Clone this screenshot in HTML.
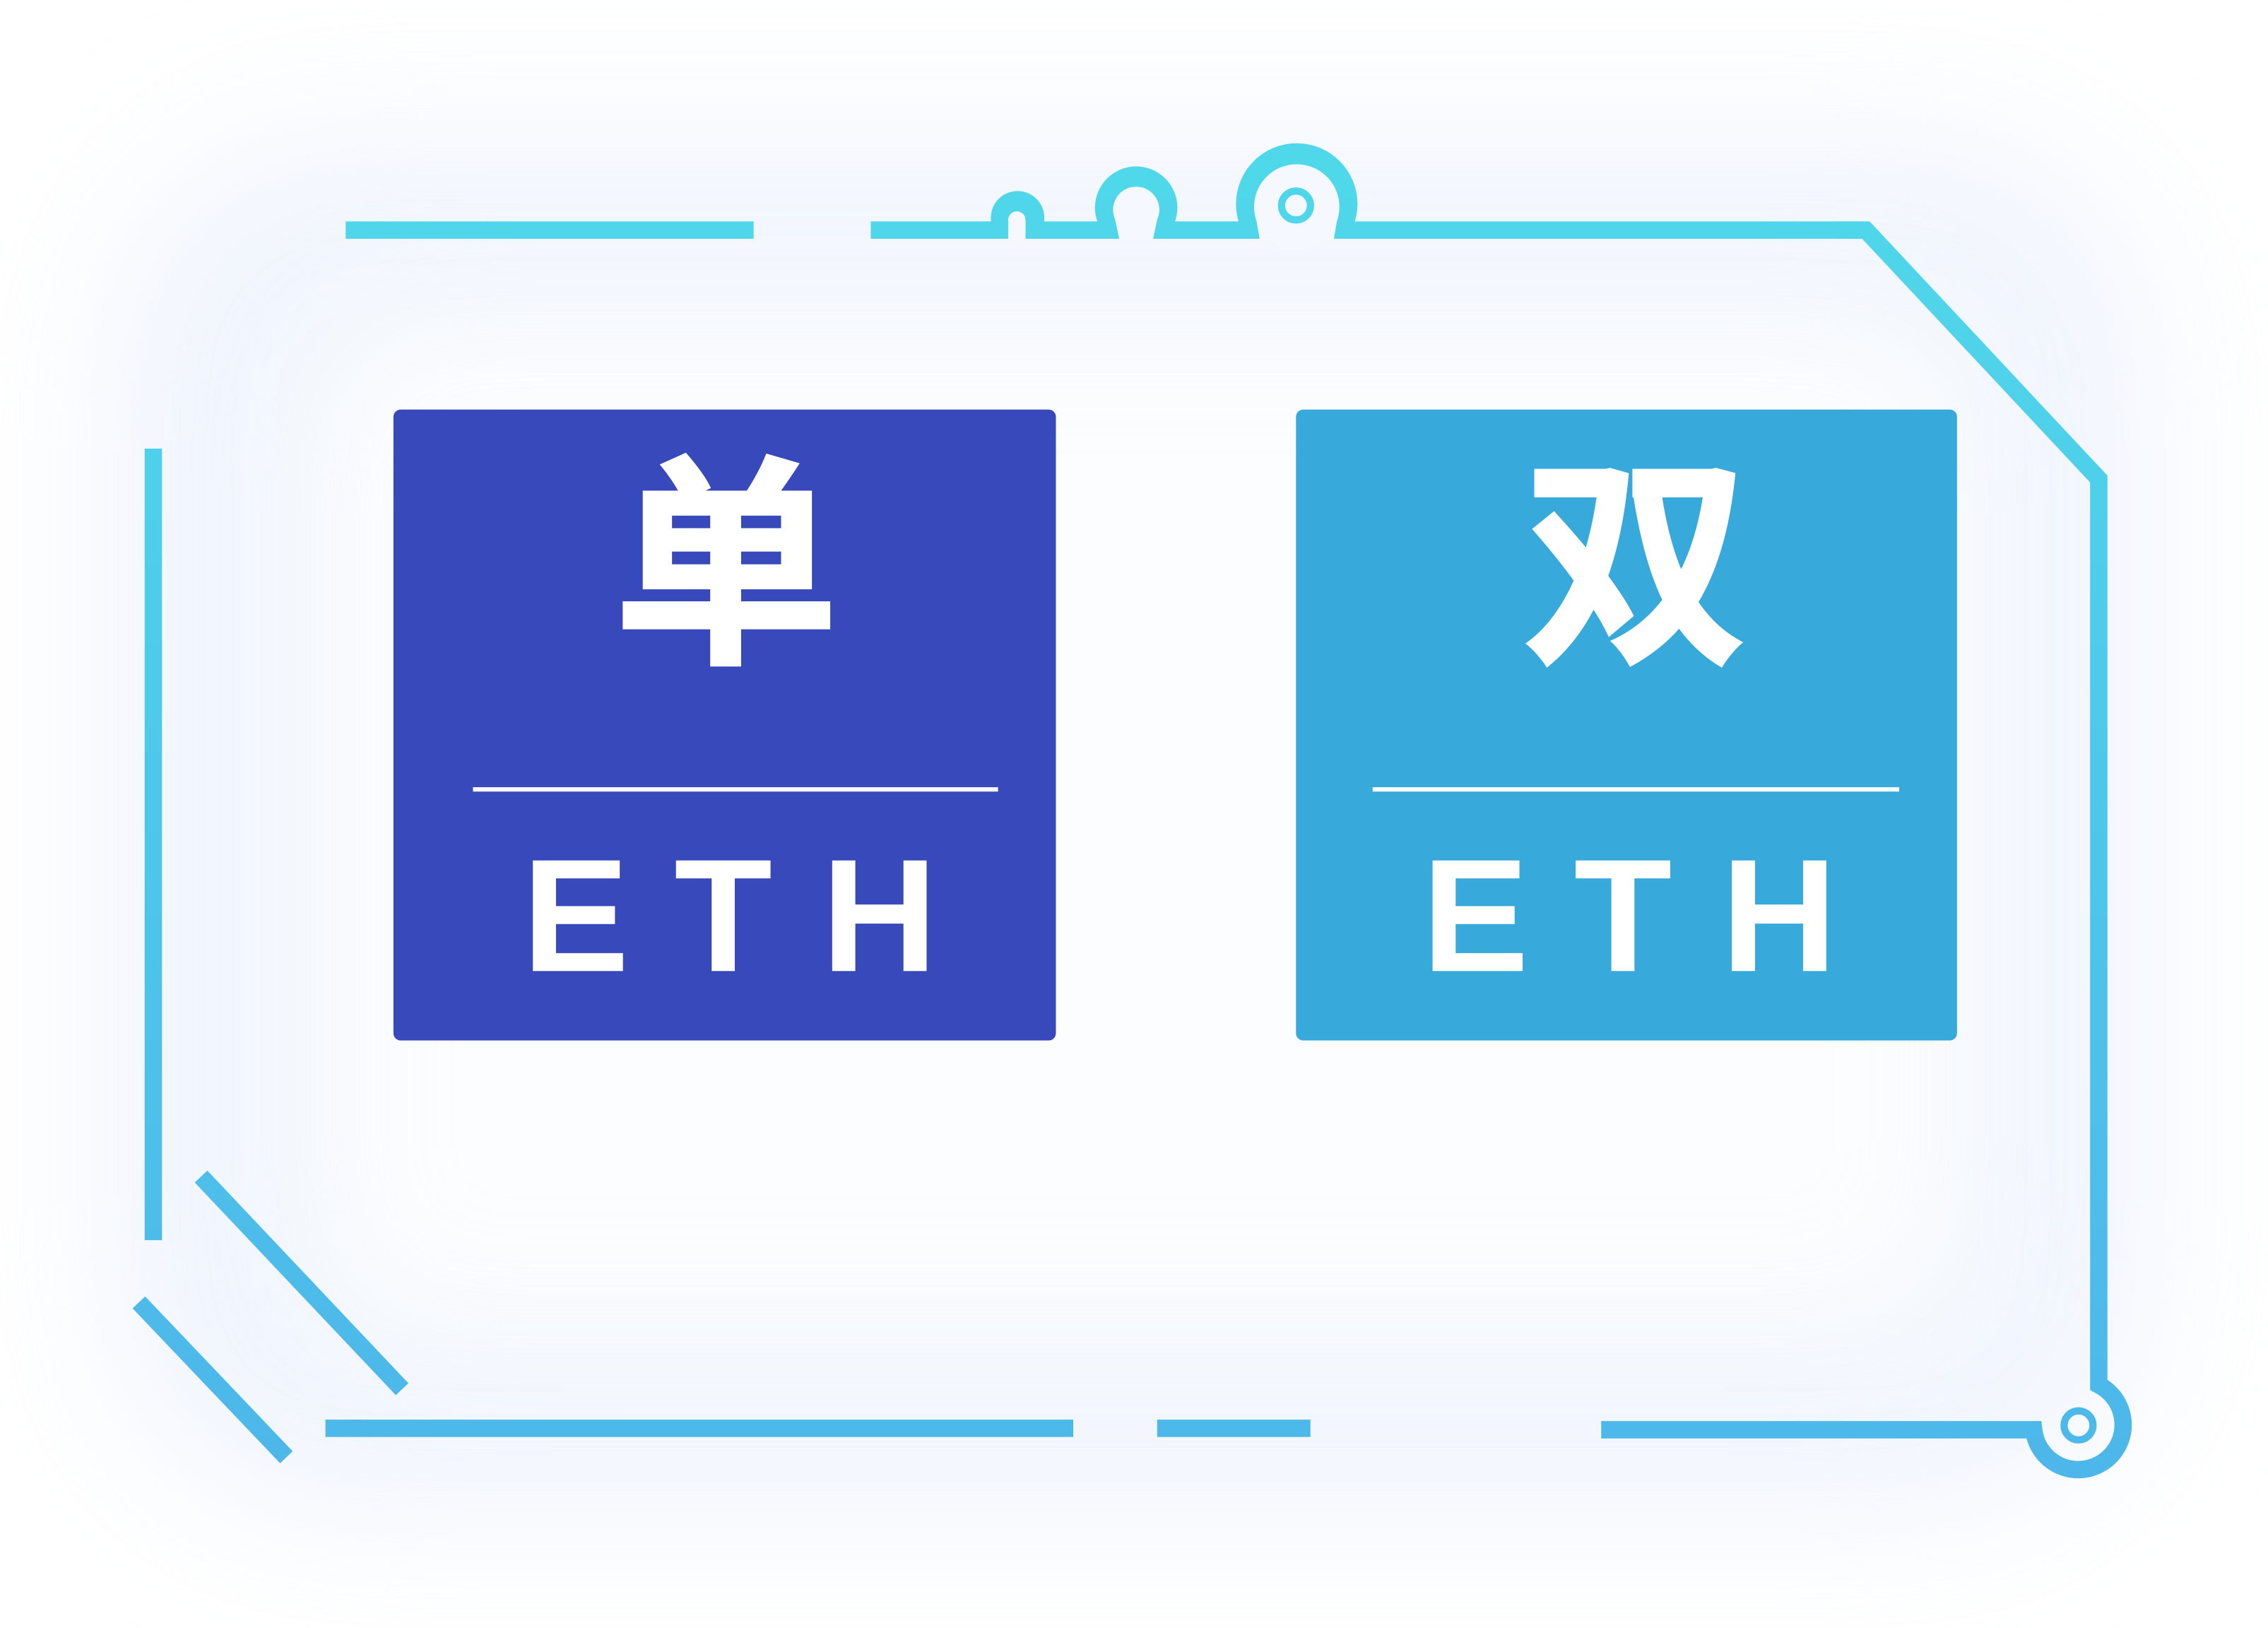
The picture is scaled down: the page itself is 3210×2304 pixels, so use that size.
<!DOCTYPE html>
<html><head><meta charset="utf-8"><style>
html,body{margin:0;padding:0;background:#fff}
svg{display:block}
</style></head><body>
<svg width="3210" height="2304" viewBox="0 0 1568 1125" preserveAspectRatio="none" xmlns="http://www.w3.org/2000/svg">
<defs>
<linearGradient id="g" gradientUnits="userSpaceOnUse" x1="0" y1="100" x2="0" y2="1030">
<stop offset="0" stop-color="#4fd8ea"/><stop offset="1" stop-color="#4db6ea"/>
</linearGradient>
<filter id="b" x="-30%" y="-30%" width="160%" height="160%"><feGaussianBlur stdDeviation="50"/></filter>
<clipPath id="top"><rect x="0" y="0" width="1568" height="158"/></clipPath>
</defs>
<rect width="1568" height="1125" fill="#fff"/>
<rect x="70" y="90" width="1420" height="960" rx="160" fill="#eaf1fc" filter="url(#b)" opacity="0.7"/>
<rect x="220" y="220" width="1140" height="700" rx="60" fill="#fff" filter="url(#b)" opacity="0.8"/>
<g fill="none" stroke="url(#g)" stroke-width="12" stroke-linejoin="miter">
<path d="M1270,159 H1290 L1451,331 V957 A31 31 0 1 1 1406,988 H1107"/>
<path d="M106,310 V857"/>
<path d="M139,813 L278,960"/>
<path d="M96,900 L198,1007"/>
</g>
<g fill="url(#g)">
<rect x="239" y="153" width="282" height="12"/>
<rect x="602" y="153" width="688" height="12"/>
<rect x="225" y="981" width="517" height="12"/>
<rect x="800" y="981" width="106" height="12"/>
<g clip-path="url(#top)">
<circle cx="703.5" cy="150.5" r="18.5"/>
<circle cx="785.5" cy="143.5" r="28.5"/>
<circle cx="896.5" cy="141" r="42"/>
</g>
</g>
<g fill="#f5f8fe">
<circle cx="703" cy="152" r="6"/>
<rect x="697" y="152" width="12" height="14"/>
<circle cx="785.5" cy="145" r="16"/>
<polygon points="769.5,145 801.5,145 797,166 774,166"/>
<circle cx="896.5" cy="143" r="29.5"/>
<polygon points="867,143 926,143 922,166 871,166"/>
</g>
<circle cx="896" cy="142" r="10" fill="none" stroke="#4fd6ea" stroke-width="5"/>
<circle cx="1437" cy="985" r="10" fill="none" stroke="#4db8ea" stroke-width="5"/>
<rect x="272" y="283" width="458" height="436" rx="5" fill="#3749bb"/>
<rect x="896" y="283" width="457" height="436" rx="5" fill="#37a9da"/>
<g fill="#fff" font-family="'Liberation Sans','Noto Sans CJK SC',sans-serif">
<text x="502" y="446" font-size="156" font-weight="bold" text-anchor="middle" stroke="#fff" stroke-width="2">单</text>
<text x="1131" y="446" font-size="156" font-weight="bold" text-anchor="middle" stroke="#fff" stroke-width="2">双</text>
<g font-size="111" font-weight="bold" text-anchor="middle">
<text x="398" y="671">E</text>
<text x="500" y="671">T</text>
<text x="608" y="671">H</text>
<text x="1020" y="671">E</text>
<text x="1122" y="671">T</text>
<text x="1230" y="671">H</text>
</g>
</g>
<rect x="327" y="544" width="363" height="3" fill="#fff"/>
<rect x="949" y="544" width="364" height="3" fill="#fff"/>
</svg>
</body></html>
